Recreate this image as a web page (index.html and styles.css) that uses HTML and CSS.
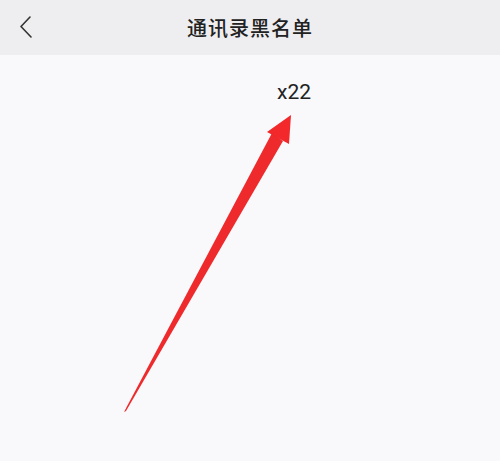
FILE: index.html
```html
<!DOCTYPE html>
<html lang="zh-CN">

<head>
  <meta charset="UTF-8" />
  <meta name="viewport" content="width=device-width, initial-scale=1.0" />
  <title>通讯录黑名单</title>
  <link rel="stylesheet" href="styles.css">
</head>

<body>
  <div class="page">
    <div class="header">
      <svg class="back" width="16" height="24" viewBox="0 0 16 24">
        <path d="M11 3 L2 12.5 L12 23" fill="none" stroke="#333" stroke-width="1.6" stroke-linecap="round" stroke-linejoin="round" />
      </svg>
      <h2 class="title">通讯录黑名单</h2>
    </div>

    <div class="content">
      <div class="count">x22</div>
    </div>

    <!-- annotation arrow -->
    <svg class="arrow" width="500" height="461" viewBox="0 0 500 461">
      <polygon points="124,412 272,133 283,141 126,411" fill="#ee2a2c" />
      <polygon points="291,115 289,144 267,132" fill="#f2282b" />
    </svg>
  </div>
</body>

</html>
```

FILE: styles.css
```css
body {
  margin: 0;
  font-family: Roboto, "Noto Sans CJK SC", sans-serif;
  background-color: #f9f9fb;
}

.page {
  position: relative;
  width: 500px;
  height: 461px;
  overflow: hidden;
}

.header {
  display: flex;
  align-items: center;
  justify-content: center;
  height: 55px;
  background-color: #eeeef0;
  position: relative;
}

.back {
  position: absolute;
  left: 19px;
  top: 14px;
}

.title {
  margin: 0;
  font-size: 20px;
  font-weight: 500;
  color: #222;
  font-family: "Noto Sans CJK SC", sans-serif;
  letter-spacing: 1px;
}

.content {
  padding: 22px 0 0 277px;
}

.count {
  font-size: 21px;
  color: #222;
  line-height: 30px;
}

.arrow {
  position: absolute;
  left: 0;
  top: 0;
}
```
